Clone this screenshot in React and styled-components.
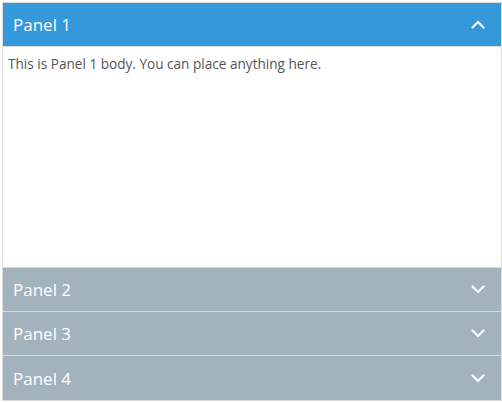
import React, { useState } from "react";
import styled, { createGlobalStyle } from "styled-components";

const Global = createGlobalStyle`
  html, body { margin: 0; padding: 0; background: #fff; }
  body { font-family: "Open Sans", "Liberation Sans", sans-serif; }
`;

const Accordion = styled.div`
  box-sizing: border-box;
  width: 500px;
  height: 399px;
  margin: 2px 0 0 2px;
  border: 1px solid #dcdcdc;
  display: flex;
  flex-direction: column;
`;

const Header = styled.button`
  flex: none;
  box-sizing: border-box;
  height: 44px;
  width: 100%;
  display: flex;
  align-items: center;
  justify-content: space-between;
  padding: 0 16px 0 10px;
  border: none;
  border-bottom: 1px solid #dcdcdc;
  background: ${(p) => (p.$open ? "#3498db" : "#a3b3bd")};
  color: #fff;
  font-family: "Open Sans", "Liberation Sans", sans-serif;
  font-size: 17px;
  cursor: pointer;
  text-align: left;
  &:last-child { border-bottom: none; }
`;

const Body = styled.div`
  flex: 1;
  box-sizing: border-box;
  padding: 7px 5px;
  border-bottom: 1px solid #dcdcdc;
  font-size: 13.6px;
  color: #555;
  background: #fff;
`;

const Chevron = ({ up }) => (
  <svg width="14" height="9" viewBox="0 0 14 9" fill="none">
    <path
      d={up ? "M1.5 7.5 L7 2 L12.5 7.5" : "M1.5 1.5 L7 7 L12.5 1.5"}
      stroke="#fff"
      strokeWidth="2.2"
      strokeLinecap="round"
      strokeLinejoin="round"
    />
  </svg>
);

const panels = [1, 2, 3, 4];

export default function App() {
  const [open, setOpen] = useState(1);
  return (
    <>
      <Global />
      <Accordion>
        {panels.map((n) => (
          <React.Fragment key={n}>
            <Header $open={open === n} onClick={() => setOpen(open === n ? 0 : n)}>
              <span>Panel {n}</span>
              <Chevron up={open === n} />
            </Header>
            {open === n && (
              <Body>This is Panel {n} body. You can place anything here.</Body>
            )}
          </React.Fragment>
        ))}
      </Accordion>
    </>
  );
}
